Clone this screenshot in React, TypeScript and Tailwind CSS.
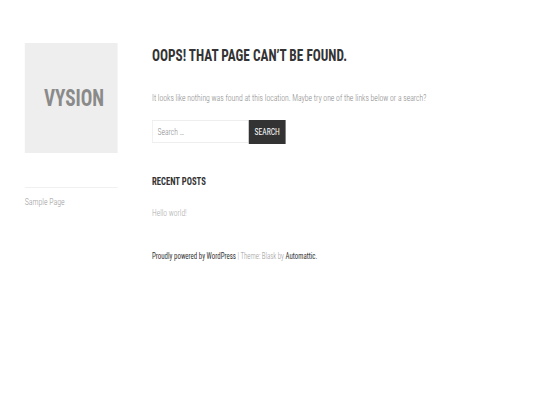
import React from "react";

// the reference looks horizontally squeezed, so lay out at 675px and squeeze by 0.8
const font = { fontFamily: 'Roboto, "Open Sans", sans-serif' };

export default function App() {
  return (
    <div className="h-[405px] w-[540px] overflow-hidden bg-white">
      <div
        className="flex w-[675px] origin-top-left scale-x-[0.8] pl-[31px] pt-[43px] [font-stretch:75%]"
        style={font}
      >
        {/* sidebar */}
        <aside className="w-[116px] shrink-0">
          <div className="flex h-[110px] items-center justify-center bg-[#eeeeee] pl-[7px]">
            <span className="text-[24px] font-bold leading-none text-[#8a8a8a]">VYSION</span>
          </div>
          <div className="mt-[34px] border-t border-[#f0f0f0] pt-[7px] text-[9.8px] font-light leading-[14px] text-[#999999]">
            Sample Page
          </div>
        </aside>

        {/* main */}
        <main className="ml-[43px] mt-px flex-1">
          <h1 className="text-[16.6px] font-bold leading-[24px] text-[#333333]">
            OOPS! THAT PAGE CAN’T BE FOUND.
          </h1>
          <p className="mt-[23px] text-[9.65px] font-light leading-[14px] text-[#888888]">
            It looks like nothing was found at this location. Maybe try one of the links below or a search?
          </p>

          <form className="mt-[15px] flex items-start">
            <input
              placeholder="Search …"
              className="h-[23px] w-[121px] border border-[#eeeeee] px-[6px] text-[9.5px] font-light text-[#333] outline-none placeholder:text-[#888888]"
            />
            <button
              type="button"
              className="h-[24px] w-[46px] bg-[#333333] text-[9.5px] text-white"
            >
              SEARCH
            </button>
          </form>

          <h2 className="mt-[31px] text-[10.8px] font-bold leading-[14px] text-[#333333]">RECENT POSTS</h2>
          <div className="mt-[17px] text-[9.5px] font-light leading-[14px] text-[#aaaaaa]">Hello world!</div>

          <footer className="mt-[29px] text-[8.6px] leading-[14px]">
            <span className="text-[#333333]">Proudly powered by WordPress</span>
            <span className="font-light text-[#999999]"> | Theme: Blask by </span>
            <span className="text-[#333333]">Automattic.</span>
          </footer>
        </main>
      </div>
    </div>
  );
}
